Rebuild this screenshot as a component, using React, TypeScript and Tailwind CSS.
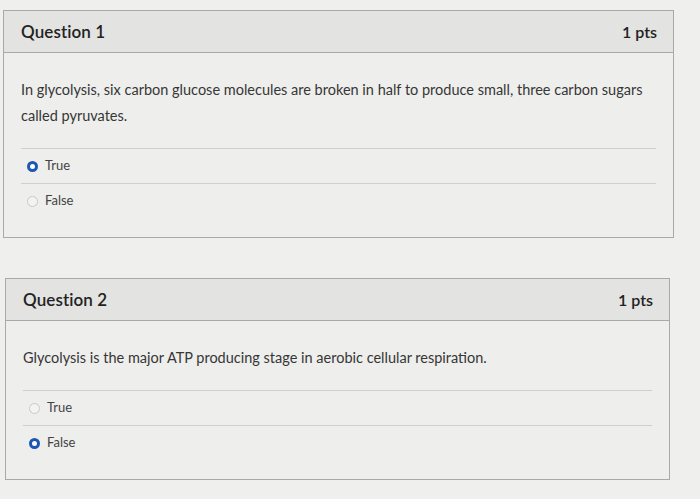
import React from "react";

type Opt = { label: string; selected: boolean };

function Radio({ selected }: { selected: boolean }) {
  return selected ? (
    <span className="inline-block w-[11px] h-[11px] rounded-full border-[3.5px] border-[#1b57b3] bg-white shrink-0" />
  ) : (
    <span className="inline-block w-[11px] h-[11px] rounded-full border border-[#c9c9c7] bg-[#f3f3f1] shrink-0" />
  );
}

function Question({
  title,
  text,
  options,
  cardClass,
}: {
  title: string;
  text: string;
  options: Opt[];
  cardClass: string;
}) {
  return (
    <div className={"border border-[#a9a9a7] bg-[#eeeeec] " + cardClass}>
      <div className="h-[42px] flex items-center justify-between pl-[17px] pr-[16px] bg-[#e3e3e1] border-b border-[#a9a9a7]">
        <span className="text-[17px] font-semibold text-[#222] tracking-[0.1px]">{title}</span>
        <span className="text-[16px] font-semibold text-[#222]">1 pts</span>
      </div>
      <div className="px-[17px] pt-[24px] pb-[19px]">
        <p className="text-[14.5px] leading-[26px] text-[#363636] pr-[8px]">{text}</p>
        <div className="mt-[19px]">
          {options.map((o) => (
            <div
              key={o.label}
              className="flex items-center h-[35px] pl-[6px] gap-[7px] border-t border-[#cfcfcd]"
            >
              <Radio selected={o.selected} />
              <span className="text-[13px] text-[#444]">{o.label}</span>
            </div>
          ))}
        </div>
      </div>
    </div>
  );
}

export default function App() {
  return (
    <div
      className="w-[700px] h-[499px] bg-[#efefed] pt-[10px] overflow-hidden"
      style={{ fontFamily: "Lato, 'Open Sans', sans-serif" }}
    >
      <Question
        title="Question 1"
        text="In glycolysis, six carbon glucose molecules are broken in half to produce small, three carbon sugars called pyruvates."
        options={[
          { label: "True", selected: true },
          { label: "False", selected: false },
        ]}
        cardClass="ml-[3px] w-[671px]"
      />
      <div className="h-[40px]" />
      <Question
        title="Question 2"
        text="Glycolysis is the major ATP producing stage in aerobic cellular respiration."
        options={[
          { label: "True", selected: false },
          { label: "False", selected: true },
        ]}
        cardClass="ml-[5px] w-[665px]"
      />
    </div>
  );
}
